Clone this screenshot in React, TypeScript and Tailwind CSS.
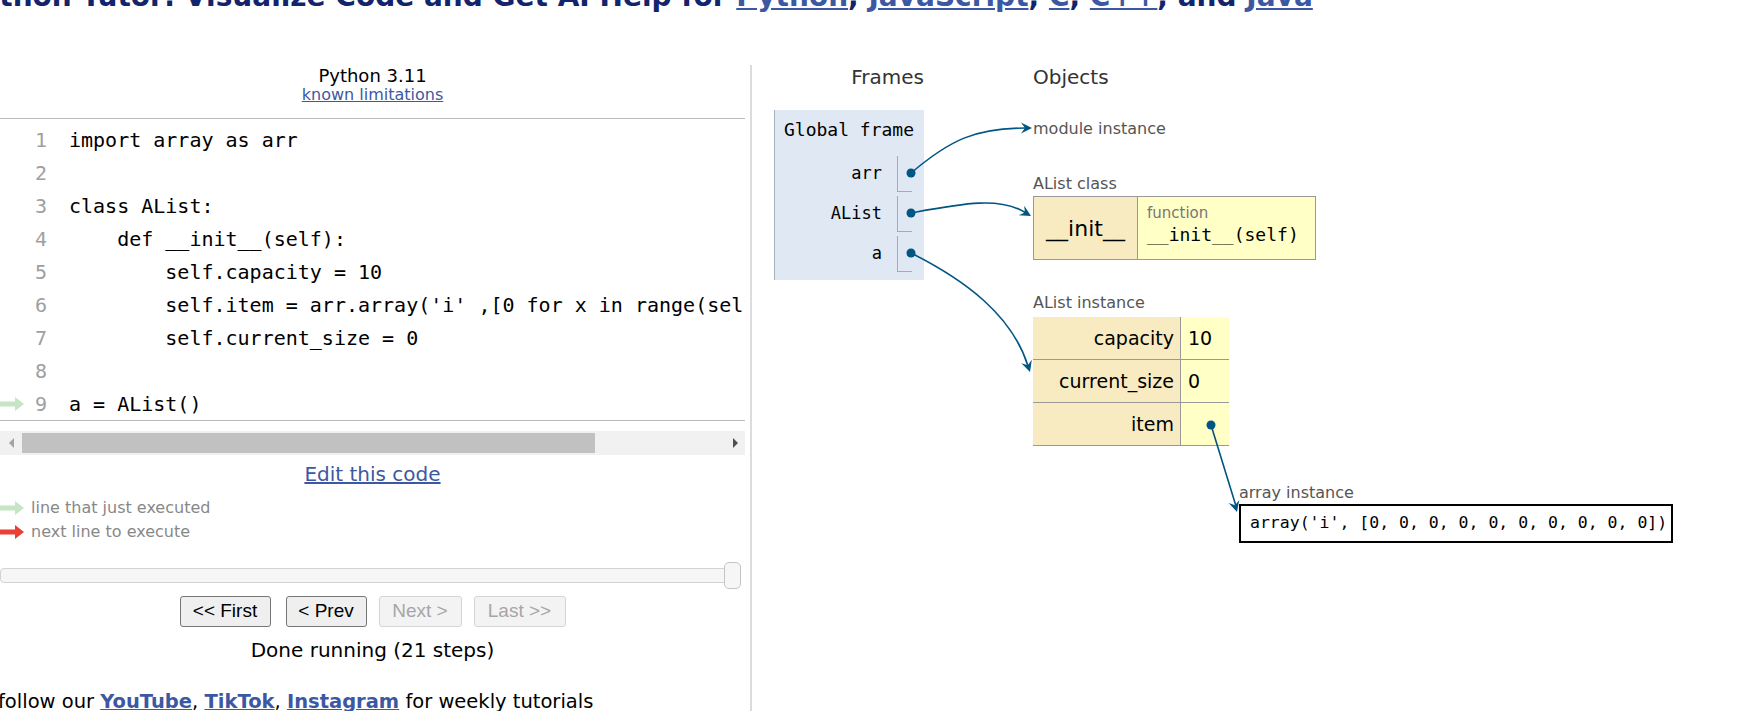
import React from "react"

const codeLines = [
  "import array as arr",
  "",
  "class AList:",
  "    def __init__(self):",
  "        self.capacity = 10",
  "        self.item = arr.array('i' ,[0 for x in range(self.capacity)])",
  "        self.current_size = 0",
  "",
  "a = AList()",
]

function LegendArrow({ color }: { color: string }) {
  return (
    <svg width="25" height="16" viewBox="0 0 25 16">
      <path d="M0 5.5 H15 V1 L24 8 L15 15 V10.5 H0 Z" fill={color} />
    </svg>
  )
}

function Arrows() {
  const c = "#005583"
  const head = (x: number, y: number, angle: number) => (
    <path
      d="M0 0 L-11 -5.5 L-7 0 L-11 5.5 Z"
      fill={c}
      transform={`translate(${x} ${y}) rotate(${angle})`}
    />
  )
  return (
    <svg className="pointer-events-none absolute left-0 top-0" width="1749" height="711">
      <g fill="none" stroke={c} strokeWidth="1.6">
        <path d="M911 173 C950 140 975 128 1026 128" />
        <path d="M911 213 C960 204 1000 196 1026 213" />
        <path d="M911 253 C965 280 1012 315 1028 366" />
        <path d="M1211 425 C1220 455 1228 480 1236 506" />
      </g>
      {head(1032, 128, 0)}
      {head(1031, 216, 30)}
      {head(1030, 372, 72)}
      {head(1237, 512, 74)}
      <g fill={c}>
        <circle cx="911" cy="173" r="4.5" />
        <circle cx="911" cy="213" r="4.5" />
        <circle cx="911" cy="253" r="4.5" />
        <circle cx="1211" cy="425" r="4.5" />
      </g>
    </svg>
  )
}

export default function App() {
  return (
    <div className="relative w-[1749px] h-[711px] overflow-hidden bg-white font-['DejaVu_Sans',sans-serif] text-black">
      {/* page title, scrolled partly out of view */}
      <h1 className="-mt-[18px] -ml-[40px] h-[30px] whitespace-nowrap text-[28px] leading-[30px] font-bold text-[#12246b]">
        Python Tutor: Visualize Code and Get AI Help for{" "}
        <span className="underline text-[#3d58a2]">Python</span>,{" "}
        <span className="underline text-[#3d58a2]">JavaScript</span>,{" "}
        <span className="underline text-[#3d58a2]">C</span>,{" "}
        <span className="underline text-[#3d58a2]">C++</span>, and{" "}
        <span className="underline text-[#3d58a2]">Java</span>
      </h1>

      <div className="mt-[53px] flex">
        {/* left: code + controls */}
        <div className="w-[752px] shrink-0 border-r-2 border-[#dcdcdc] pr-[5px]">
          <div className="text-center">
            <div className="h-[22px] text-[18px] leading-[22px]">Python 3.11</div>
            <div className="h-[16px] text-[16px] leading-[16px] text-[#3d58a2] underline">known limitations</div>
          </div>

          <div className="mt-[15px] border-t border-b border-[#bbbbbb] pt-[4px] overflow-hidden font-['DejaVu_Sans_Mono',monospace] text-[20px]">
            {codeLines.map((line, i) => (
              <div key={i} className="flex h-[33px] items-center whitespace-pre">
                <div className="w-[25px] shrink-0">{i === 8 && <LegendArrow color="#c5e5c5" />}</div>
                <div className="w-[22px] shrink-0 text-right text-[#a0a0a0]">{i + 1}</div>
                <div className="w-[22px] shrink-0" />
                <div>{line}</div>
              </div>
            ))}
          </div>

          {/* horizontal scrollbar */}
          <div className="mt-[10px] flex h-[24px] items-center bg-[#f1f1f1]">
            <div className="flex w-[22px] justify-center">
              <div className="h-0 w-0 border-y-[5px] border-r-[5px] border-y-transparent border-r-[#a3a3a3]" />
            </div>
            <div className="h-[20px] w-[573px] bg-[#c1c1c1]" />
            <div className="flex-1" />
            <div className="flex w-[20px] justify-center">
              <div className="h-0 w-0 border-y-[5px] border-l-[5px] border-y-transparent border-l-[#505050]" />
            </div>
          </div>

          <div className="mt-[8px] h-[22px] text-center text-[20px] leading-[22px] text-[#3d58a2] underline">Edit this code</div>

          <div className="mt-[11px] text-[16px] text-[#888888]">
            <div className="flex h-[24px] items-center gap-[6px]">
              <LegendArrow color="#c5e5c5" />
              <span>line that just executed</span>
            </div>
            <div className="flex h-[24px] items-center gap-[6px]">
              <LegendArrow color="#e93f34" />
              <span>next line to execute</span>
            </div>
          </div>

          {/* step slider */}
          <div className="relative mt-[18px] flex h-[27px] w-[741px] items-center">
            <div className="h-[15px] w-[738px] rounded-[4px] border border-[#d3d3d3] bg-[#f6f6f6]" />
            <div className="absolute left-[724px] top-0 h-[27px] w-[17px] rounded-[5px] border border-[#c5c5c5] bg-[#f6f6f6]" />
          </div>

          <div className="mt-[7px] flex justify-center font-['Liberation_Sans',sans-serif] text-[19px]">
            <button className="h-[31px] w-[91px] rounded-[3px] border border-[#767676] bg-[#efefef]">&lt;&lt; First</button>
            <button className="ml-[15px] h-[31px] w-[81px] rounded-[3px] border border-[#767676] bg-[#efefef]">&lt; Prev</button>
            <button className="ml-[12px] h-[31px] w-[83px] rounded-[3px] border border-[#d5d5d5] bg-[#f3f3f3] text-[#a6a6a6]">Next &gt;</button>
            <button className="ml-[12px] h-[31px] w-[92px] rounded-[3px] border border-[#d5d5d5] bg-[#f3f3f3] text-[#a6a6a6]">Last &gt;&gt;</button>
          </div>

          <div className="mt-[11px] h-[24px] text-center text-[20px] leading-[24px]">Done running (21 steps)</div>

          <div className="-ml-[2px] mt-[28px] h-[24px] whitespace-nowrap text-[19.5px] leading-[24px]">
            follow our <span className="font-bold text-[#3d58a2] underline">YouTube</span>,{" "}
            <span className="font-bold text-[#3d58a2] underline">TikTok</span>,{" "}
            <span className="font-bold text-[#3d58a2] underline">Instagram</span> for weekly tutorials
          </div>
        </div>

        {/* right: frames and objects */}
        <div className="flex pl-[22px]">
          <div className="w-[150px]">
            <div className="h-[24px] text-right text-[20px] leading-[24px] text-[#333333]">Frames</div>
            <div className="mt-[21px] h-[170px] border-l border-[#a6b3b6] bg-[#dfe8f3] pt-[7px]">
              <div className="h-[26px] pl-[9px] font-['DejaVu_Sans_Mono',monospace] text-[18px] leading-[26px]">Global frame</div>
              <div className="mt-[11px] font-['DejaVu_Sans_Mono',monospace] text-[17px]">
                {["arr", "AList", "a"].map((v) => (
                  <div key={v} className="flex h-[40px] items-center justify-end pr-[12px]">
                    <span>{v}</span>
                    <div className="ml-[15px] h-[36px] w-[15px] border-l border-b border-[#aaaaaa]" />
                  </div>
                ))}
              </div>
            </div>
          </div>

          <div className="ml-[109px]">
            <div className="h-[24px] text-[20px] leading-[24px] text-[#333333]">Objects</div>

            <div className="mt-[30px] h-[20px] text-[16px] leading-[20px] text-[#555555]">module instance</div>

            <div className="mt-[36px] h-[18px] text-[16px] leading-[18px] text-[#555555]">AList class</div>
            <div className="mt-[3px] flex h-[64px] w-[283px] border border-[#999999]">
              <div className="flex w-[104px] items-center justify-center border-r border-[#999999] bg-[#f9ebc1] text-[22px]">
                __init__
              </div>
              <div className="flex-1 bg-[#ffffc6] pl-[9px] pt-[7px]">
                <div className="text-[15px] leading-[18px] text-[#777777]">function</div>
                <div className="font-['DejaVu_Sans_Mono',monospace] text-[18px] leading-[26px]">__init__(self)</div>
              </div>
            </div>

            <div className="flex items-start">
              <div>
                <div className="mt-[34px] h-[18px] text-[16px] leading-[18px] text-[#555555]">AList instance</div>
                <div className="mt-[5px] w-[196px] text-[19px]">
                  {[
                    ["capacity", "10"],
                    ["current_size", "0"],
                    ["item", ""],
                  ].map(([k, v]) => (
                    <div key={k} className="flex h-[43px] border-b border-[#999999]">
                      <div className="flex w-[148px] items-center justify-end border-r border-[#999999] bg-[#f9ebc1] pr-[6px]">
                        {k}
                      </div>
                      <div className="flex flex-1 items-center bg-[#ffffc6] pl-[7px]">{v}</div>
                    </div>
                  ))}
                </div>
              </div>

              <div className="ml-[10px] mt-[224px]">
                <div className="h-[18px] text-[16px] leading-[18px] text-[#555555]">array instance</div>
                <div className="mt-[2px] flex h-[39px] w-[434px] items-center border-2 border-black pl-[9px] font-['DejaVu_Sans_Mono',monospace] text-[16.5px] whitespace-pre">
                  array('i', [0, 0, 0, 0, 0, 0, 0, 0, 0, 0])
                </div>
              </div>
            </div>
          </div>
        </div>
      </div>

      <Arrows />
    </div>
  )
}
